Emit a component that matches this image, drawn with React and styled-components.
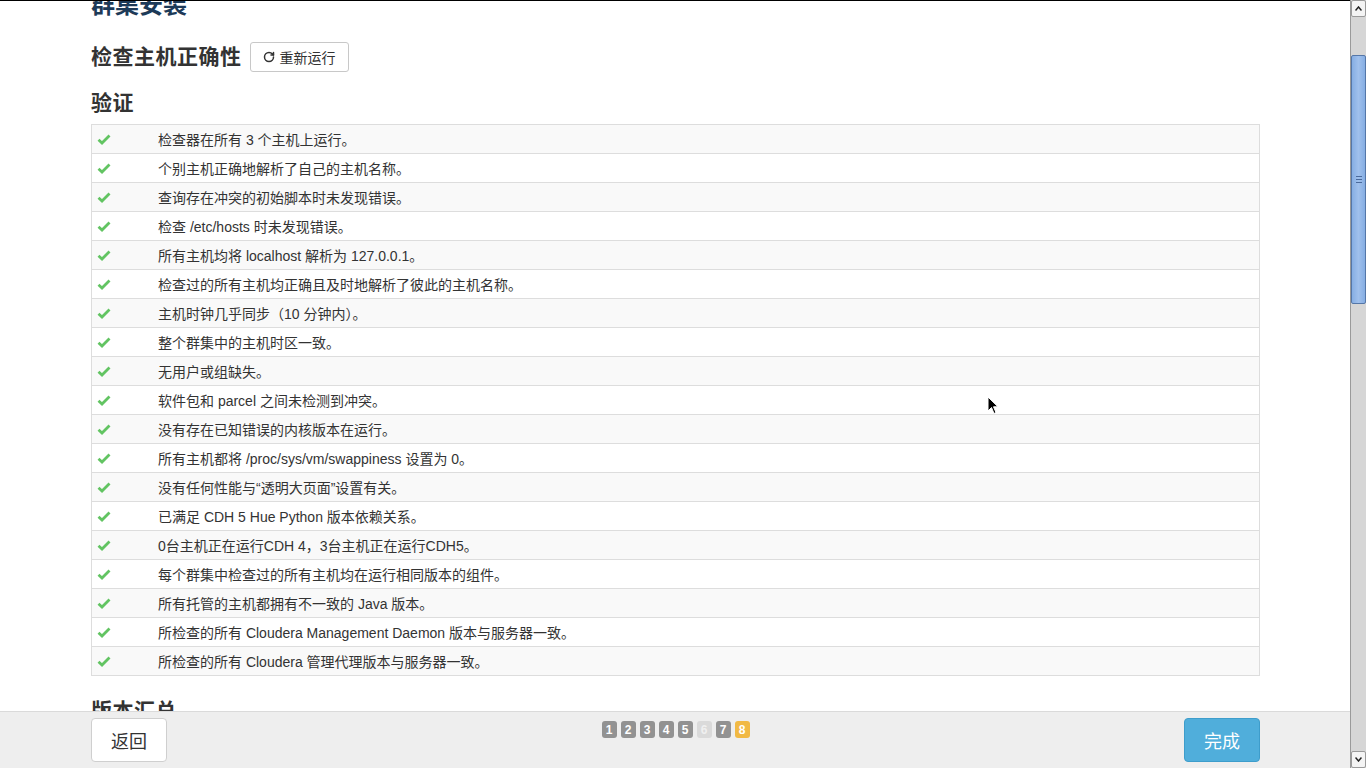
import React from 'react';
import styled, { createGlobalStyle } from 'styled-components';
import { RotateCw } from 'lucide-react';

const GlobalStyle = createGlobalStyle`
  html, body {
    margin: 0;
    padding: 0;
    background: #fff;
    overflow: hidden;
  }
  body {
    font-family: "Liberation Sans", "Noto Sans CJK SC", sans-serif;
    color: #333;
  }
`

const Screen = styled.div`
  width: 1366px;
  height: 768px;
  display: flex;
  position: relative;
  overflow: hidden;
`

const Page = styled.div`
  flex: 1;
  display: flex;
  flex-direction: column;
  border-top: 1px solid #000;
  min-width: 0;
`

const Main = styled.div`
  flex: 1;
  overflow: hidden;
  padding: 0 90px 0 91px;
`

const PageTitle = styled.h1`
  margin: -11px 0 0;
  font-size: 24px;
  line-height: 30px;
  font-weight: bold;
  color: #1d3a58;
`

const SectionHead = styled.div`
  display: flex;
  align-items: center;
  gap: 8px;
  margin-top: 22px;
`

const H2 = styled.h2`
  margin: ${p => p.$mt || 0}px 0 0;
  font-size: 21px;
  line-height: 30px;
  font-weight: bold;
  color: #333;
  letter-spacing: 0.5px;
`

const SmallButton = styled.button`
  display: flex;
  align-items: center;
  gap: 5px;
  height: 30px;
  padding: 0 12px;
  background: #fff;
  border: 1px solid #c8c8c8;
  border-radius: 3px;
  font-family: inherit;
  font-size: 14px;
  color: #333;
`

const Table = styled.div`
  margin-top: 6px;
  border: 1px solid #ddd;
`

const Row = styled.div`
  display: flex;
  align-items: center;
  height: 28px;
  background: ${p => (p.$odd ? '#f9f9f9' : '#fff')};
  & + & {
    border-top: 1px solid #ddd;
  }
`

const IconCell = styled.div`
  width: 66px;
  padding-left: 5px;
  box-sizing: border-box;
  display: flex;
  align-items: center;
`

const TextCell = styled.div`
  font-size: 14px;
  color: #333;
  white-space: nowrap;
`

const Footer = styled.div`
  height: 57px;
  box-sizing: border-box;
  flex-shrink: 0;
  background: #eeeeee;
  border-top: 1px solid #dadada;
  display: grid;
  grid-template-columns: 1fr auto 1fr;
  align-items: start;
  padding: 6px 90px 0 91px;
`

const FooterButton = styled.button`
  justify-self: ${p => (p.$right ? 'end' : 'start')};
  width: 76px;
  height: 44px;
  border-radius: 4px;
  font-family: inherit;
  font-size: 18px;
  border: 1px solid ${p => (p.$primary ? '#3e9dcb' : '#cfcfcf')};
  background: ${p => (p.$primary ? '#50aedb' : '#fff')};
  color: ${p => (p.$primary ? '#fff' : '#333')};
`

const Steps = styled.div`
  display: flex;
  gap: 4px;
  margin-top: 3px;
`

const Step = styled.span`
  width: 15px;
  height: 17px;
  border-radius: 3px;
  display: flex;
  align-items: center;
  justify-content: center;
  font-size: 12px;
  font-weight: bold;
  color: ${p => (p.$state === 'off' ? '#f0f0f0' : '#fff')};
  background: ${p =>
    p.$state === 'current' ? '#f1b944' : p.$state === 'off' ? '#dadada' : '#929292'};
`

const Scrollbar = styled.div`
  width: 15px;
  background: #d6d6d6;
  border-left: 1px solid #9a9a9a;
  display: flex;
  flex-direction: column;
`

const ScrollArrow = styled.div`
  height: 15px;
  background: #f4f4f4;
  border: 1px solid #9a9a9a;
  border-radius: 2px;
  display: flex;
  align-items: center;
  justify-content: center;
  flex-shrink: 0;
`

const Track = styled.div`
  flex: 1;
  display: flex;
  flex-direction: column;
  padding-top: 38px;
`

const Thumb = styled.div`
  height: 249px;
  background: linear-gradient(90deg, #86aee3, #a0c0ec 50%, #86aee3);
  border: 1px solid #5577a8;
  border-radius: 2px;
  display: flex;
  align-items: center;
  justify-content: center;
  box-sizing: border-box;
`

const Grip = styled.div`
  width: 6px;
  height: 7px;
  background: repeating-linear-gradient(180deg, #4a6a9c 0 1px, transparent 1px 3px);
`

const Spacer = styled.div`
  flex: 1;
`

const Cursor = styled.svg`
  position: absolute;
  left: 987px;
  top: 396px;
`

const Check = () => (
  <svg width="14" height="11" viewBox="0 0 14 11">
    <path d="M1.5 5.8 L5 9 L12.5 1.5" fill="none" stroke="#62c462" strokeWidth="2.8" strokeLinejoin="miter" />
  </svg>
)

const checks = [
  '检查器在所有 3 个主机上运行。',
  '个别主机正确地解析了自己的主机名称。',
  '查询存在冲突的初始脚本时未发现错误。',
  '检查 /etc/hosts 时未发现错误。',
  '所有主机均将 localhost 解析为 127.0.0.1。',
  '检查过的所有主机均正确且及时地解析了彼此的主机名称。',
  '主机时钟几乎同步（10 分钟内）。',
  '整个群集中的主机时区一致。',
  '无用户或组缺失。',
  '软件包和 parcel 之间未检测到冲突。',
  '没有存在已知错误的内核版本在运行。',
  '所有主机都将 /proc/sys/vm/swappiness 设置为 0。',
  '没有任何性能与“透明大页面”设置有关。',
  '已满足 CDH 5 Hue Python 版本依赖关系。',
  '0台主机正在运行CDH 4，3台主机正在运行CDH5。',
  '每个群集中检查过的所有主机均在运行相同版本的组件。',
  '所有托管的主机都拥有不一致的 Java 版本。',
  '所检查的所有 Cloudera Management Daemon 版本与服务器一致。',
  '所检查的所有 Cloudera 管理代理版本与服务器一致。',
];

const steps = [1, 2, 3, 4, 5, 6, 7, 8];

const App = () => {
  return (
    <Screen>
      <GlobalStyle />
      <Page>
        <Main>
          <PageTitle>群集安装</PageTitle>
          <SectionHead>
            <H2>检查主机正确性</H2>
            <SmallButton>
              <RotateCw size={12} strokeWidth={3} />
              重新运行
            </SmallButton>
          </SectionHead>
          <H2 $mt={16}>验证</H2>
          <Table>
            {checks.map((text, i) => (
              <Row key={i} $odd={i % 2 === 0}>
                <IconCell>
                  <Check />
                </IconCell>
                <TextCell>{text}</TextCell>
              </Row>
            ))}
          </Table>
          <H2 $mt={20}>版本汇总</H2>
        </Main>
        <Footer>
          <FooterButton>返回</FooterButton>
          <Steps>
            {steps.map(n => (
              <Step key={n} $state={n === 8 ? 'current' : n === 6 ? 'off' : 'done'}>
                {n}
              </Step>
            ))}
          </Steps>
          <FooterButton $primary $right>完成</FooterButton>
        </Footer>
      </Page>
      <Scrollbar>
        <ScrollArrow>
          <svg width="7" height="5" viewBox="0 0 7 5">
            <path d="M0.5 4.5 L3.5 1 L6.5 4.5" fill="none" stroke="#222" strokeWidth="1.5" />
          </svg>
        </ScrollArrow>
        <Track>
          <Thumb>
            <Grip />
          </Thumb>
          <Spacer />
        </Track>
        <ScrollArrow>
          <svg width="7" height="5" viewBox="0 0 7 5">
            <path d="M0.5 0.5 L3.5 4 L6.5 0.5" fill="none" stroke="#222" strokeWidth="1.5" />
          </svg>
        </ScrollArrow>
      </Scrollbar>
      <Cursor width="12" height="19" viewBox="0 0 12 19">
        <path d="M1 1 L1 15 L4.5 11.5 L7 17.5 L9 16.5 L6.5 10.8 L11 10.8 Z" fill="#000" stroke="#fff" strokeWidth="1" />
      </Cursor>
    </Screen>
  );
};

export default App;
